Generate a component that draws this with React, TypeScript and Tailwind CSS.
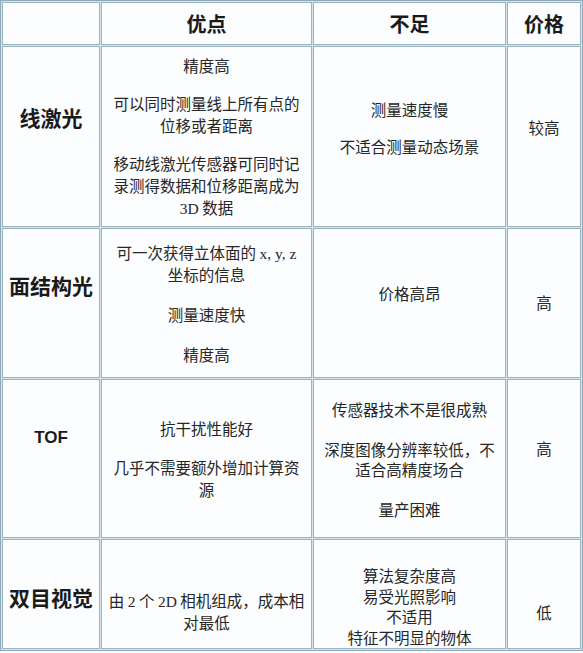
import type { ReactNode } from "react";

type CellProps = {
  children: ReactNode;
  className?: string;
};

function Cell({ children, className = "" }: CellProps) {
  return (
    <div
      className={
        "flex flex-col items-center justify-center overflow-hidden border border-[#9cb4c1] bg-[#fcfdfe] text-center " +
        className
      }
    >
      {children}
    </div>
  );
}

function Head({ children }: { children: ReactNode }) {
  return <div className="text-[20px] font-bold leading-none text-[#1a1a1a]">{children}</div>;
}

function Label({ children }: { children: ReactNode }) {
  return <div className="whitespace-nowrap text-[21px] font-bold leading-none text-[#1a1a1a]">{children}</div>;
}

function Lat({ children }: { children: ReactNode }) {
  return <span className="font-['Liberation_Serif',serif]">{children}</span>;
}

export default function App() {
  return (
    <div className="min-h-[653px] bg-white font-['Noto_Sans_CJK_SC',sans-serif] text-[15.5px] text-[#262626]">
      <div className="grid w-[583px] grid-cols-[98px_211px_193px_74px] grid-rows-[43px_181px_150px_159px_110px] gap-px border border-[#8fabba] bg-[#d5e4ec] p-px">
        {/* header */}
        <Cell>
          <span />
        </Cell>
        <Cell>
          <Head>优点</Head>
        </Cell>
        <Cell>
          <Head>不足</Head>
        </Cell>
        <Cell>
          <Head>价格</Head>
        </Cell>

        {/* 线激光 */}
        <Cell className="pb-[38px]">
          <Label>线激光</Label>
        </Cell>
        <Cell className="gap-4 leading-[22px]">
          <p>精度高</p>
          <p>
            可以同时测量线上所有点的
            <br />
            位移或者距离
          </p>
          <p className="whitespace-nowrap">
            移动线激光传感器可同时记
            <br />
            录测得数据和位移距离成为
            <br />
            <Lat>3D</Lat> 数据
          </p>
        </Cell>
        <Cell className="gap-[15px] pb-[19px] leading-[22px]">
          <p>测量速度慢</p>
          <p>不适合测量动态场景</p>
        </Cell>
        <Cell className="pb-[18px]">
          <p>较高</p>
        </Cell>

        {/* 面结构光 */}
        <Cell className="pb-[35px]">
          <Label>面结构光</Label>
        </Cell>
        <Cell className="gap-5 leading-[20px]">
          <p className="whitespace-nowrap">
            可一次获得立体面的 <Lat>x, y, z</Lat>
            <br />
            坐标的信息
          </p>
          <p>测量速度快</p>
          <p>精度高</p>
        </Cell>
        <Cell className="pb-[19px]">
          <p>价格高昂</p>
        </Cell>
        <Cell>
          <p>高</p>
        </Cell>

        {/* TOF */}
        <Cell className="pb-[42px]">
          <div className="font-['Liberation_Sans',sans-serif] text-[17px] font-bold leading-none text-[#1a1a1a]">TOF</div>
        </Cell>
        <Cell className="gap-[17px] leading-[22px]">
          <p>抗干扰性能好</p>
          <p className="whitespace-nowrap">
            几乎不需要额外增加计算资
            <br />
            源
          </p>
        </Cell>
        <Cell className="gap-5 leading-[20px]">
          <p>传感器技术不是很成熟</p>
          <p className="whitespace-nowrap">
            深度图像分辨率较低，不
            <br />
            适合高精度场合
          </p>
          <p>量产困难</p>
        </Cell>
        <Cell className="pb-[20px]">
          <p>高</p>
        </Cell>

        {/* 双目视觉 */}
        <Cell className="pt-[7px]">
          <Label>双目视觉</Label>
        </Cell>
        <Cell className="pt-[34px] leading-[21px]">
          <p className="whitespace-nowrap">
            由 <Lat>2</Lat> 个 <Lat>2D</Lat> 相机组成，成本相
            <br />
            对最低
          </p>
        </Cell>
        <Cell className="justify-start pt-[25px] leading-[20.5px]">
          <p>算法复杂度高</p>
          <p>易受光照影响</p>
          <p>不适用</p>
          <p>特征不明显的物体</p>
        </Cell>
        <Cell className="pt-[37px]">
          <p>低</p>
        </Cell>
      </div>
    </div>
  );
}
